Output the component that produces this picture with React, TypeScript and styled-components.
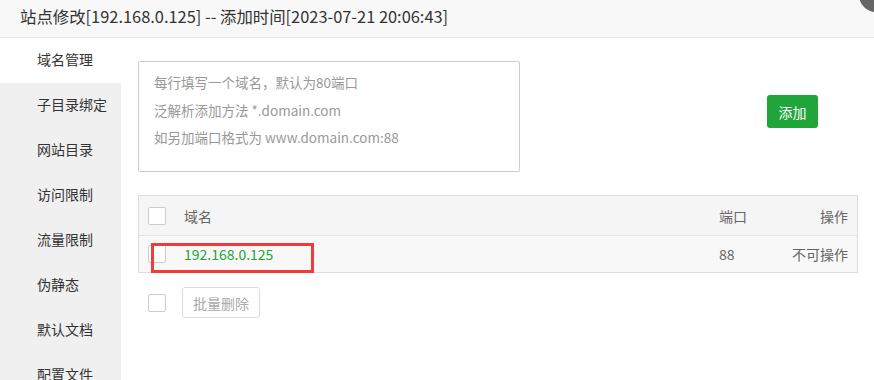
import React from "react";
import styled, { createGlobalStyle } from "styled-components";

const Global = createGlobalStyle`
  html, body { margin: 0; padding: 0; background: #fff; }
  body { font-family: "Noto Sans CJK SC", "Noto Sans", "Liberation Sans", sans-serif; }
  * { box-sizing: border-box; }
`;

const Frame = styled.div`
  position: relative;
  width: 874px;
  height: 380px;
  overflow: hidden;
  background: #fff;
  display: flex;
  flex-direction: column;
`;

const Header = styled.div`
  height: 38px;
  flex: none;
  background: #f8f8f8;
  border-bottom: 1px solid #e6e6e6;
  padding-left: 20px;
  font-size: 16.4px;
  line-height: 33px;
  color: #333;
`;

const CloseDot = styled.div`
  position: absolute;
  left: 859px;
  top: -22px;
  width: 34px;
  height: 34px;
  border-radius: 50%;
  background: #666;
`;

const Body = styled.div`
  flex: 1;
  display: flex;
  min-height: 0;
`;

const Sidebar = styled.div`
  width: 121px;
  flex: none;
  background: #f0f0f0;
  display: flex;
  flex-direction: column;
`;

const NavItem = styled.div<{ $active?: boolean }>`
  height: 45px;
  flex: none;
  line-height: 43px;
  padding-left: 37px;
  font-size: 14px;
  color: #333;
  white-space: nowrap;
  background: ${(p) => (p.$active ? "#fff" : "transparent")};
`;

const Content = styled.div`
  flex: 1;
  padding: 23px 16px 0 17px;
  display: flex;
  flex-direction: column;
`;

const InputRow = styled.div`
  display: flex;
  align-items: flex-start;
  gap: 247px;
`;

const Textarea = styled.div`
  width: 382px;
  height: 111px;
  border: 1px solid #ccc;
  border-radius: 2px;
  padding: 7px 15px;
  font-size: 13.5px;
  line-height: 27.5px;
  color: #999;
`;

const AddButton = styled.button`
  margin-top: 34px;
  width: 51px;
  height: 33px;
  border: none;
  border-radius: 3px;
  background: #20a53a;
  color: #fff;
  font-family: inherit;
  font-size: 14px;
  padding: 0;
`;

const Table = styled.div`
  position: relative;
  margin-top: 23px;
  width: 720px;
  border: 1px solid #ddd;
`;

const Row = styled.div<{ $head?: boolean }>`
  display: grid;
  grid-template-columns: 36px 1fr 60px 69px;
  align-items: center;
  padding: 0 9px;
  height: ${(p) => (p.$head ? "39px" : "37px")};
  background: ${(p) => (p.$head ? "#f5f5f5" : "#f8f8f8")};
  border-top: ${(p) => (p.$head ? "none" : "1px solid #e2e2e2")};
  font-size: 14px;
  color: #666;
`;

const Cell = styled.div<{ $right?: boolean; $green?: boolean }>`
  text-align: ${(p) => (p.$right ? "right" : "left")};
  color: ${(p) => (p.$green ? "#20a53a" : "#666")};
  white-space: nowrap;
`;

const Check = styled.span`
  display: block;
  width: 18px;
  height: 18px;
  border: 1px solid #ccc;
  border-radius: 2px;
  background: #fff;
`;

const Highlight = styled.div`
  position: absolute;
  left: 12px;
  top: 47px;
  width: 163px;
  height: 30px;
  border: 3px solid #f23a3a;
  pointer-events: none;
`;

const Footer = styled.div`
  margin-top: 14px;
  display: flex;
  align-items: center;
  padding-left: 10px;
  gap: 16px;
`;

const BatchButton = styled.button`
  width: 78px;
  height: 31px;
  border: 1px solid #ddd;
  border-radius: 3px;
  background: #fff;
  color: #aaa;
  font-family: inherit;
  font-size: 14px;
  padding: 0;
`;

const navItems = [
  "域名管理",
  "子目录绑定",
  "网站目录",
  "访问限制",
  "流量限制",
  "伪静态",
  "默认文档",
  "配置文件",
];

export default function App() {
  return (
    <>
      <Global />
      <Frame>
        <Header>站点修改[192.168.0.125] -- 添加时间[2023-07-21 20:06:43]</Header>
        <CloseDot />
        <Body>
          <Sidebar>
            {navItems.map((n, i) => (
              <NavItem key={n} $active={i === 0}>
                {n}
              </NavItem>
            ))}
          </Sidebar>
          <Content>
            <InputRow>
              <Textarea>
                <div>每行填写一个域名，默认为80端口</div>
                <div>泛解析添加方法 *.domain.com</div>
                <div>如另加端口格式为 www.domain.com:88</div>
              </Textarea>
              <AddButton>添加</AddButton>
            </InputRow>
            <Table>
              <Row $head>
                <Check />
                <Cell>域名</Cell>
                <Cell>端口</Cell>
                <Cell $right>操作</Cell>
              </Row>
              <Row>
                <Check />
                <Cell $green>192.168.0.125</Cell>
                <Cell>88</Cell>
                <Cell $right>不可操作</Cell>
              </Row>
              <Highlight />
            </Table>
            <Footer>
              <Check />
              <BatchButton>批量删除</BatchButton>
            </Footer>
          </Content>
        </Body>
      </Frame>
    </>
  );
}
